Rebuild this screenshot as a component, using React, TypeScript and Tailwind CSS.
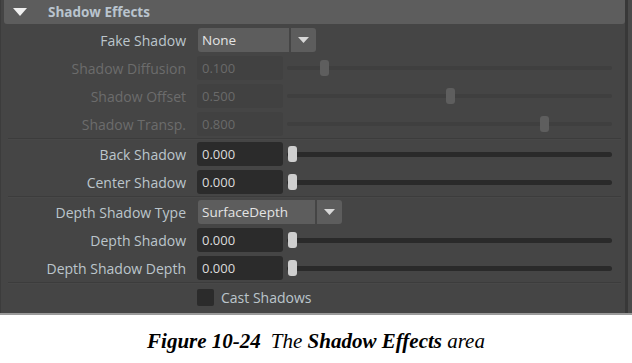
const labelFont = { fontFamily: '"Open Sans", "Noto Sans", sans-serif' }

function Label({ text, disabled }: { text: string; disabled?: boolean }) {
  return (
    <div
      className={`w-[183px] shrink-0 pr-[1px] text-right text-[14px] ${disabled ? 'text-[#6c6c6c]' : 'text-[#bcc5cc]'}`}
    >
      {text}
    </div>
  )
}

function Thumb({ left, disabled }: { left: number; disabled?: boolean }) {
  return (
    <div
      className={`absolute top-1/2 h-[16px] w-[9px] -translate-y-1/2 rounded-[3px] ${disabled ? 'bg-[#5e5e5e]' : 'bg-[#cfcfcf]'}`}
      style={{ left }}
    />
  )
}

function SliderRow({
  label,
  value,
  pos,
  disabled,
}: {
  label: string
  value: string
  pos: number
  disabled?: boolean
}) {
  return (
    <div className="flex h-[28px] items-center">
      <Label text={label} disabled={disabled} />
      <div
        className={`ml-[10px] flex h-[24px] w-[86px] shrink-0 items-center rounded-[3px] pl-[5px] pt-[1px] text-[13px] ${disabled ? 'bg-[#414141] text-[#6a6a6a]' : 'bg-[#2b2b2b] text-[#dcdcdc]'}`}
      >
        {value}
      </div>
      <div className="relative ml-[4px] flex h-[18px] w-[325px] items-center">
        <div
          className={`w-full rounded-full ${disabled ? 'h-[4px] bg-[#3f3f3f]' : 'h-[5px] bg-[#2a2a2a]'}`}
        />
        <Thumb left={pos} disabled={disabled} />
      </div>
    </div>
  )
}

function Dropdown({ label, value, width }: { label: string; value: string; width: number }) {
  return (
    <div className="flex h-[28px] items-center">
      <Label text={label} />
      <div className="ml-[11px] flex h-[24px] items-center gap-[2px]">
        <div
          className="flex h-full items-center rounded-l-[3px] bg-[#5d5d5d] pl-[4px] text-[13.5px] text-[#e4e4e4]"
          style={{ width }}
        >
          {value}
        </div>
        <div className="flex h-full w-[25px] items-center justify-center rounded-r-[3px] bg-[#5d5d5d]">
          <svg width="11" height="6" viewBox="0 0 11 6">
            <path d="M0 0 H11 L5.5 6 Z" fill="#d8d8d8" />
          </svg>
        </div>
      </div>
    </div>
  )
}

function Sep() {
  return <div className="mx-[4px] h-[2px] border-t border-[#3c3c3c] bg-[#484848]" />
}

export default function App() {
  return (
    <div className="h-[363px] w-[632px] bg-white" style={labelFont}>
      <div className="flex h-[315px] border-b-2 border-[#9a9a9a] bg-[#454545]">
        <div className="flex w-[625px] flex-col border-l border-[#3c3c3c] pl-[3px]">
          <div className="flex h-[24px] items-center rounded-b-[3px] bg-[#5d5d5d]">
            <svg className="ml-[9px]" width="14" height="8" viewBox="0 0 14 8">
              <path d="M0 0 H14 L7 8 Z" fill="#f0f0f0" />
            </svg>
            <span className="ml-[21px] text-[13.5px] font-bold text-[#b9c4ce]">Shadow Effects</span>
          </div>
          <div className="h-[2px]" />
          <Dropdown label="Fake Shadow" value="None" width={91} />
          <SliderRow label="Shadow Diffusion" value="0.100" pos={33} disabled />
          <SliderRow label="Shadow Offset" value="0.500" pos={159} disabled />
          <SliderRow label="Shadow Transp." value="0.800" pos={253} disabled />
          <Sep />
          <SliderRow label="Back Shadow" value="0.000" pos={1} />
          <SliderRow label="Center Shadow" value="0.000" pos={1} />
          <Sep />
          <Dropdown label="Depth Shadow Type" value="SurfaceDepth" width={117} />
          <SliderRow label="Depth Shadow" value="0.000" pos={1} />
          <SliderRow label="Depth Shadow Depth" value="0.000" pos={1} />
          <Sep />
          <div className="flex h-[26px] items-center pl-[193px]">
            <div className="h-[17px] w-[17px] rounded-[2px] bg-[#2b2b2b]" />
            <span className="ml-[7px] text-[14px] text-[#bcc5cc]">Cast Shadows</span>
          </div>
        </div>
        <div className="flex w-[7px]">
          <div className="w-[3px] bg-[#383838]" />
          <div className="w-[4px] bg-[#4a4a4a]" />
        </div>
      </div>
      <div
        className="pt-[11px] text-center text-[21px] italic text-black"
        style={{ fontFamily: '"Liberation Serif", serif' }}
      >
        <span className="font-bold">Figure 10-24</span>
        <span className="ml-[10px]">The </span>
        <span className="font-bold">Shadow Effects</span>
        <span> area</span>
      </div>
    </div>
  )
}
